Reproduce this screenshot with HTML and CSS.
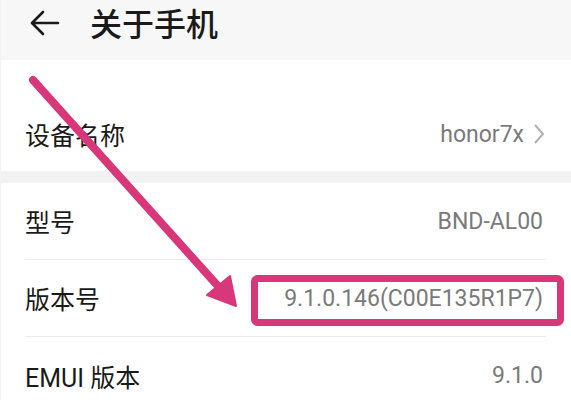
FILE: index.html
```html
<!DOCTYPE html>
<html lang="zh">
<head>
<meta charset="utf-8">
<link rel="stylesheet" href="styles.css">
</head>
<body>
<div class="page">
  <header class="topbar">
    <svg class="back" width="30" height="26" viewBox="0 0 30 26"><path d="M28 13H3M13 2L2 13l11 11" fill="none" stroke="#1a1a1a" stroke-width="2.6" stroke-linecap="round" stroke-linejoin="round"/></svg>
    <h1 class="title">关于手机</h1>
  </header>
  <section class="group first">
    <div class="row">
      <span class="label">设备名称</span>
      <span class="value">honor7x<svg class="chev" width="12" height="22" viewBox="0 0 12 22"><path d="M2 2l8 9-8 9" fill="none" stroke="#b0b0b0" stroke-width="2"/></svg></span>
    </div>
  </section>
  <div class="gap"></div>
  <section class="group">
    <div class="row line"><span class="label">型号</span><span class="value">BND-AL00</span></div>
    <div class="row line"><span class="label">版本号</span><span class="value">9.1.0.146(C00E135R1P7)</span></div>
    <div class="row"><span class="label">EMUI 版本</span><span class="value">9.1.0</span></div>
  </section>
  <svg class="annot" width="571" height="400" viewBox="0 0 571 400">
    <line x1="32" y1="80" x2="216" y2="285" stroke="#d8387a" stroke-width="8" stroke-linecap="round"/>
    <polygon points="235,306 206,295 229,276" fill="#d8387a" stroke="#d8387a" stroke-width="2" stroke-linejoin="round"/>
    <rect x="253.5" y="278.5" width="306" height="44" rx="3" fill="none" stroke="#d8387a" stroke-width="7"/>
  </svg>
</div>
</body>
</html>
```
FILE: styles.css
```css
* { box-sizing: border-box; }
html, body { margin: 0; padding: 0; background: #fff; }
body { font-family: Roboto, "Noto Sans CJK SC", sans-serif; }
.page {
  position: relative;
  width: 571px;
  height: 400px;
  overflow: hidden;
  border-left: 1px solid #f3f3f3;
}
.topbar {
  height: 60px;
  background: #f7f7f7;
  display: flex;
  align-items: flex-start;
  padding-left: 29px;
}
.back { margin-top: 10px; }
.title {
  margin: 0 0 0 30px;
  font-size: 32px;
  font-weight: 500;
  line-height: 44px;
  color: #1a1a1a;
  font-family: "Noto Sans CJK SC", sans-serif;
}
.group { background: #fff; }
.group.first { padding-top: 37px; }
.gap { height: 12px; background: #f2f2f2; }
.row {
  height: 77px;
  display: flex;
  align-items: center;
  justify-content: space-between;
  margin: 0 25px 0 24px;
  padding-right: 3px;
}
.first .row { height: 74px; }
.row.line { border-bottom: 1px solid #ececec; }
.label {
  font-size: 25px;
  color: #1a1a1a;
  font-family: Roboto, "Noto Sans CJK SC", sans-serif;
}
.value {
  font-size: 23px;
  color: #7a7a7a;
  display: flex;
  align-items: center;
}
.chev { margin-left: 9px; margin-right: -2px; }
.annot { position: absolute; left: 0; top: 0; pointer-events: none; }
```
